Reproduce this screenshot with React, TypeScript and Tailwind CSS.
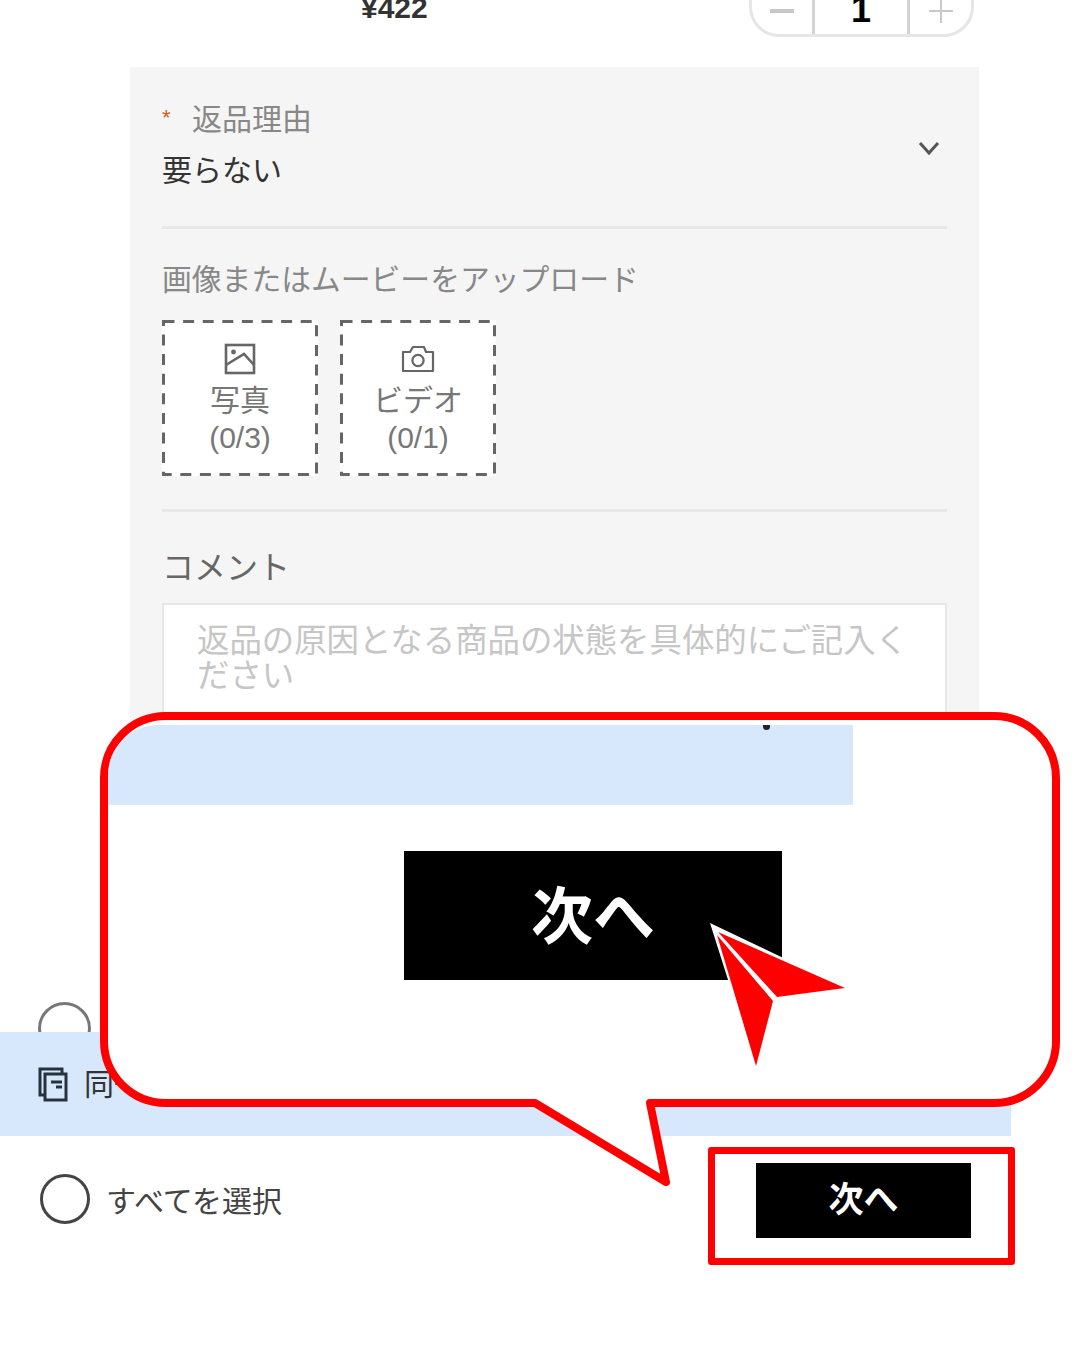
const jp = "font-['Liberation_Sans','Noto_Sans_CJK_JP',sans-serif]";

function ImageIcon() {
    return (
        <svg width="32" height="32" viewBox="0 0 32 32" fill="none" stroke="#666" strokeWidth="2.6">
            <rect x="2" y="2" width="28" height="28" />
            <path d="M2 22 L20 11 L30 22" />
            <circle cx="9.5" cy="9" r="2.4" fill="#666" stroke="none" />
        </svg>
    );
}

function CameraIcon() {
    return (
        <svg width="34" height="28" viewBox="0 0 34 28" fill="none" stroke="#666" strokeWidth="2.2">
            <path d="M2 7 H9 L12 2 H23 L25 7 H32 V26 H2 Z" strokeLinejoin="round" />
            <circle cx="17" cy="15.5" r="5.6" />
        </svg>
    );
}

function CopyIcon() {
    return (
        <svg width="30" height="35" viewBox="0 0 30 35" fill="none" stroke="#26323e" strokeWidth="3">
            <path d="M24 6 V2 H2 V28 H6" />
            <rect x="7" y="7" width="21" height="26" />
            <path d="M13 15 H24 M18 20 H24" />
        </svg>
    );
}

function UploadBox({ icon, label, count }: { icon: React.ReactNode; label: string; count: string }) {
    return (
        <div className="relative flex h-[156px] w-[156px] flex-col items-center bg-white pt-[21px] text-[30px] leading-[37px] text-[#777]">
            <svg className="absolute left-0 top-0" width="156" height="156" viewBox="0 0 156 156" fill="none">
                <rect x="1.5" y="1.5" width="153" height="153" stroke="#666" strokeWidth="3" strokeDasharray="11 8.6" />
            </svg>
            <div className="flex h-[36px] items-center">{icon}</div>
            <div className="mt-[5px]">{label}</div>
            <div>{count}</div>
        </div>
    );
}

function Callout() {
    return (
        <>
            <svg className="absolute left-0 top-0" width="1080" height="1351" viewBox="0 0 1080 1351">
                <path
                    d="M166 716 H994 A62 62 0 0 1 1056 778 V1041 A62 62 0 0 1 994 1103 H650 L666 1182 L535 1103 H166 A62 62 0 0 1 104 1041 V778 A62 62 0 0 1 166 716 Z"
                    fill="#fff"
                    stroke="#ff0000"
                    strokeWidth="8"
                    strokeLinejoin="round"
                />
            </svg>
            <div className="absolute left-[108px] top-[725px] h-[80px] w-[745px] rounded-tl-[50px] border-b border-[#e3e8ef] bg-[#d8e8fc]" />
            <div className="absolute left-[763px] top-[725px] h-[5px] w-[7px] rounded-b-full bg-[#222]" />
            <div className={`absolute left-[404px] top-[851px] flex h-[129px] w-[378px] items-center justify-center bg-black pt-[3px] text-[62px] font-bold text-white ${jp}`}>
                次へ
            </div>
            <svg className="absolute left-0 top-0" width="1080" height="1351" viewBox="0 0 1080 1351">
                <polygon points="710,923 848,989 777,1000 756,1068" fill="#fff" />
                <polygon points="718,932 845,988 777,997" fill="#ff0000" />
                <polygon points="717,935 773,1001 756,1066" fill="#ff0000" />
            </svg>
            <div className="absolute left-[708px] top-[1147px] h-[118px] w-[307px] rounded-[3px] border-[7px] border-[#ff0000]" />
        </>
    );
}

export default function App() {
    return (
        <div className={`relative h-[1351px] w-[1080px] overflow-hidden bg-white ${jp}`}>
            {/* 商品の行 (上が切れている) */}
            <div className="flex h-[37px] items-end">
                <div className="ml-[361px] w-[388px] self-start text-[30px] font-bold leading-[16px] text-[#333]">¥422</div>
                <div className="flex h-[50px] w-[225px] items-center rounded-b-[30px] border-[3px] border-t-0 border-[#e6e6e6]">
                    <div className="flex h-full w-[60px] items-center justify-center">
                        <div className="h-[4px] w-[24px] bg-[#c8c8c8]" />
                    </div>
                    <div className="flex h-full w-[98px] items-end justify-center border-x-[3px] border-[#d4d4d4] pb-[6px] text-[36px] font-bold leading-[36px] text-black">
                        1
                    </div>
                    <div className="flex h-full flex-1 items-center justify-center">
                        <div className="relative h-[2px] w-[24px] bg-[#c8c8c8]">
                            <div className="absolute -top-[11px] left-[11px] h-[24px] w-[2px] bg-[#c8c8c8]" />
                        </div>
                    </div>
                </div>
            </div>

            {/* 返品フォーム */}
            <div className="ml-[130px] mt-[30px] h-[923px] w-[849px] bg-[#f5f5f5] px-[32px] pt-[32px]">
                <div className="flex h-[130px] items-start justify-between border-b-[3px] border-[#e8e8e8]">
                    <div>
                        <div className="flex h-[40px] items-center text-[30px] text-[#888]">
                            <span className="w-[30px] self-start pt-[2px] text-[22px] text-[#d4601e]">*</span>
                            返品理由
                        </div>
                        <div className="mt-[12px] text-[30px] leading-[40px] text-[#333]">要らない</div>
                    </div>
                    <svg className="mr-[7px] mt-[42px]" width="22" height="14" viewBox="0 0 22 14" fill="none" stroke="#555" strokeWidth="3">
                        <path d="M2 2 L11 12 L20 2" />
                    </svg>
                </div>
                <div className="mt-[31px] text-[29.8px] leading-[40px] text-[#888]">画像またはムービーをアップロード</div>
                <div className="mt-[20px] flex gap-[22px]">
                    <UploadBox icon={<ImageIcon />} label="写真" count="(0/3)" />
                    <UploadBox icon={<CameraIcon />} label="ビデオ" count="(0/1)" />
                </div>
                <div className="mt-[33px] border-b-[3px] border-[#e8e8e8]" />
                <div className="mt-[36px] text-[32px] leading-[40px] text-[#666]">コメント</div>
                <div className="mt-[15px] h-[200px] border-2 border-[#e6e6e6] bg-white pl-[33px] pr-[30px] pt-[19px] text-[32.4px] leading-[35px] text-[#c6c6c6]">
                    返品の原因となる商品の状態を具体的にご記入ください
                </div>
            </div>

            {/* 同じ理由の行 */}
            <div className="ml-[38px] mt-[12px] h-[53px] w-[53px] rounded-full border-[3px] border-[#777]" />
            <div className="relative -mt-[23px] flex h-[104px] w-[1011px] items-center gap-[16px] bg-[#d8e8fc] pl-[38px] text-[30px] text-[#333]">
                <CopyIcon />
                <span>同一理由を適用</span>
            </div>

            {/* 下部の操作 */}
            <div className="flex items-start justify-between pl-[40px] pr-[109px] pt-[27px]">
                <div className="mt-[10px] flex items-center gap-[16px] text-[30px] text-[#444]">
                    <div className="h-[50px] w-[50px] rounded-full border-[3px] border-[#444]" />
                    <span className="mt-[6px]">すべてを選択</span>
                </div>
                <div className="flex h-[75px] w-[215px] items-center justify-center bg-black text-[35px] font-bold text-white">次へ</div>
            </div>

            <Callout />
        </div>
    );
}
